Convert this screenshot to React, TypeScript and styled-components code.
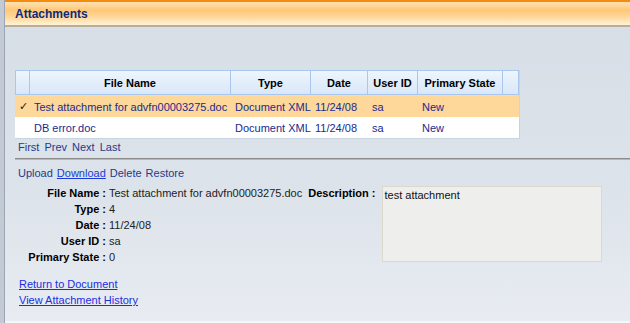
import React from "react";
import styled, { createGlobalStyle } from "styled-components";

const Global = createGlobalStyle`
  html, body { margin: 0; padding: 0; }
  body { font-family: "Liberation Sans", Arial, sans-serif; font-size: 11px; background: #d7dfe8; }
`;

const Page = styled.div`
  width: 630px;
  height: 323px;
  display: flex;
  overflow: hidden;
`;

const Strip = styled.div`
  width: 4px;
  flex: none;
  background: #c3cad4;
  border-right: 1px solid #9aa6b6;
`;

const Main = styled.div`
  flex: 1;
  display: flex;
  flex-direction: column;
  background: linear-gradient(#d6dee7, #dde3ea 60%, #e8ecf2);
  border-bottom: 2px solid #f4f6f9;
`;

const Header = styled.div`
  height: 23px;
  border-top: 2px solid #f58a0c;
  border-bottom: 2px solid #b8ad98;
  background: linear-gradient(#ffe2b2 0%, #ffc877 35%, #ffd79a 65%, #fff3d6 100%);
  display: flex;
  align-items: center;
  padding-left: 10px;
  font-family: "Liberation Sans", Arial, sans-serif;
  font-weight: bold;
  font-size: 12px;
  color: #0c2a7a;
`;

const Content = styled.div`
  padding: 43px 0 0 10px;
  display: flex;
  flex-direction: column;
`;

const Grid = styled.div`
  width: 504px;
  display: grid;
  grid-template-columns: 15px 201px 80px 57px 50px 85px 16px;
  border-right: 1px solid #c8d4e2;
  border-bottom: 1px solid #c8d4e2;
`;

const Th = styled.div`
  height: 23px;
  display: flex;
  align-items: center;
  justify-content: center;
  font-weight: bold;
  color: #000;
  background: linear-gradient(#eef5fd, #d8e7f9);
  border: 1px solid #a8c6ee;
  border-left-width: 0;
  &:first-child { border-left-width: 1px; }
  margin-bottom: 1px;
`;

const Td = styled.div<{ $sel?: boolean }>`
  height: 21px;
  display: flex;
  align-items: center;
  padding-left: 4px;
  background: ${(p) => (p.$sel ? "#fed79a" : "#ffffff")};
  color: #1a2a8e;
  white-space: nowrap;
  overflow: hidden;
`;

const Check = styled(Td)`
  padding-left: 4px;
  color: #222;
  font-size: 11px;
`;

const Pager = styled.div`
  display: flex;
  gap: 5px;
  margin: 1px 0 0 3px;
  color: #1e3a8c;
  height: 14px;
  align-items: center;
`;

const Separator = styled.div`
  margin-top: 4px;
  height: 1px;
  background: #8c8c8c;
  border-bottom: 1px solid #b4b8be;
`;

const Actions = styled.div`
  display: flex;
  gap: 4px;
  margin: 6px 0 0 3px;
  color: #1e3a8c;
  height: 14px;
  align-items: center;
`;

const ActionLink = styled.span<{ $active?: boolean }>`
  color: ${(p) => (p.$active ? "#1a3bd8" : "#1e3a8c")};
  text-decoration: ${(p) => (p.$active ? "underline" : "none")};
`;

const Details = styled.div`
  display: flex;
  margin-top: 5px;
`;

const Fields = styled.div`
  display: grid;
  grid-template-columns: 91px auto;
  grid-auto-rows: 16px;
  column-gap: 3px;
  align-items: center;
`;

const Label = styled.div`
  font-weight: bold;
  text-align: right;
  color: #000;
  white-space: nowrap;
`;

const Value = styled.div`
  color: #222;
  white-space: nowrap;
`;

const DescLabel = styled(Label)`
  margin-left: 6px;
  height: 16px;
  line-height: 16px;
`;

const DescBox = styled.div`
  margin-left: 7px;
  margin-top: 1px;
  width: 220px;
  height: 76px;
  background: #eeeeec;
  border: 1px solid #dcd8cc;
  padding: 2px 0 0 1px;
  color: #111;
  box-sizing: border-box;
`;

const Links = styled.div`
  display: flex;
  flex-direction: column;
  margin: 12px 0 0 4px;
  gap: 2px;
`;

const Link = styled.a`
  color: #1a2ee0;
  text-decoration: underline;
  height: 14px;
  line-height: 14px;
  width: fit-content;
`;

const cols = ["", "File Name", "Type", "Date", "User ID", "Primary State", ""];
const rows = [
  { sel: true, name: "Test attachment for advfn00003275.doc" },
  { sel: false, name: "DB error.doc" },
];

export default function App() {
  return (
    <Page>
      <Global />
      <Strip />
      <Main>
        <Header>Attachments</Header>
        <Content>
          <Grid>
            {cols.map((c, i) => (
              <Th key={i}>{c}</Th>
            ))}
            {rows.map((r, i) => (
              <React.Fragment key={i}>
                <Check $sel={r.sel}>{r.sel ? "✓" : ""}</Check>
                <Td $sel={r.sel}>{r.name}</Td>
                <Td $sel={r.sel}>Document XML</Td>
                <Td $sel={r.sel}>11/24/08</Td>
                <Td $sel={r.sel}>sa</Td>
                <Td $sel={r.sel}>New</Td>
                <Td $sel={r.sel} />
              </React.Fragment>
            ))}
          </Grid>
          <Pager>
            <span>First</span>
            <span>Prev</span>
            <span>Next</span>
            <span>Last</span>
          </Pager>
          <Separator />
          <Actions>
            <ActionLink>Upload</ActionLink>
            <ActionLink $active>Download</ActionLink>
            <ActionLink>Delete</ActionLink>
            <ActionLink>Restore</ActionLink>
          </Actions>
          <Details>
            <Fields>
              <Label>File Name :</Label>
              <Value>Test attachment for advfn00003275.doc</Value>
              <Label>Type :</Label>
              <Value>4</Value>
              <Label>Date :</Label>
              <Value>11/24/08</Value>
              <Label>User ID :</Label>
              <Value>sa</Value>
              <Label>Primary State :</Label>
              <Value>0</Value>
            </Fields>
            <DescLabel>Description :</DescLabel>
            <DescBox>test attachment</DescBox>
          </Details>
          <Links>
            <Link>Return to Document</Link>
            <Link>View Attachment History</Link>
          </Links>
        </Content>
      </Main>
    </Page>
  );
}
